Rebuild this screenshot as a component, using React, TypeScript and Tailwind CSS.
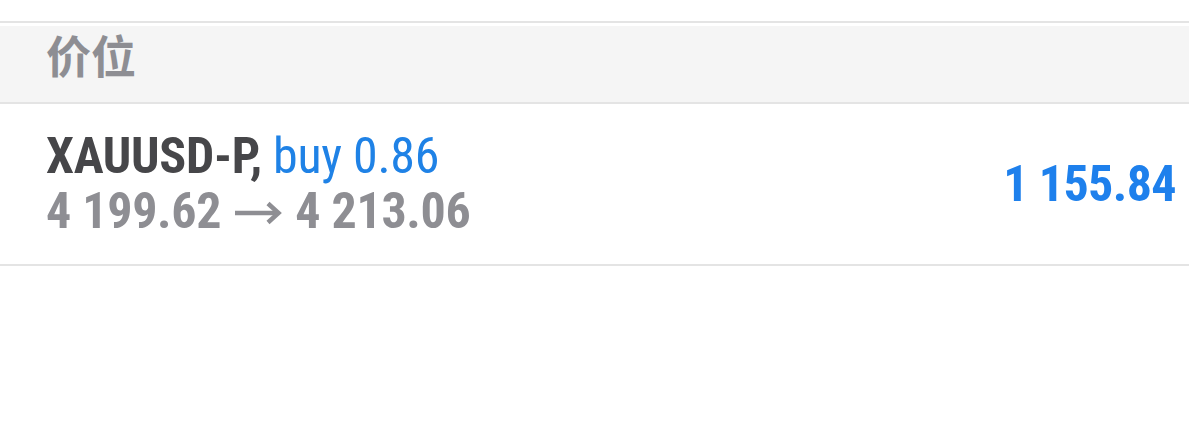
function LongArrow() {
  return (
    <svg width="48" height="24" viewBox="0 0 48 24" fill="none" className="mx-[13px] mt-[2px]">
      <path d="M1 12H44" stroke="currentColor" strokeWidth="4.5" />
      <path d="M34 2.5L44.5 12L34 21.5" stroke="currentColor" strokeWidth="4.5" strokeLinejoin="miter" />
    </svg>
  )
}

export default function App() {
  return (
    <div className="h-[432px] w-[1189px] bg-white font-['Roboto',sans-serif]">
      <div className="h-[21px]" />
      <div className="border-y-2 border-[#e4e4e4] pt-[3px]">
        <div className="flex h-[76px] items-center bg-[#f5f5f5] px-[46px] pb-[20px]">
          <span className="font-['Noto_Sans_CJK_SC',sans-serif] text-[45px] font-bold leading-none text-[#8e8e93]">
            价位
          </span>
        </div>
      </div>
      <div className="flex h-[162px] items-center justify-between border-b-2 border-[#e4e4e4] pl-[46px] pr-[13px]">
        <div className="flex flex-col font-stretch-condensed text-[50px] leading-[55px] tracking-[-0.3px]">
          <div>
            <span className="font-bold text-[#464649]">XAUUSD-P,</span>{' '}
            <span className="text-[#1f82e6]">buy 0.86</span>
          </div>
          <div className="flex items-center font-bold text-[#8e8e93]">
            <span>4 199.62</span>
            <LongArrow />
            <span>4 213.06</span>
          </div>
        </div>
        <div className="font-stretch-condensed text-[50px] font-bold tracking-[-0.6px] text-[#1e80ec]">1 155.84</div>
      </div>
    </div>
  )
}
